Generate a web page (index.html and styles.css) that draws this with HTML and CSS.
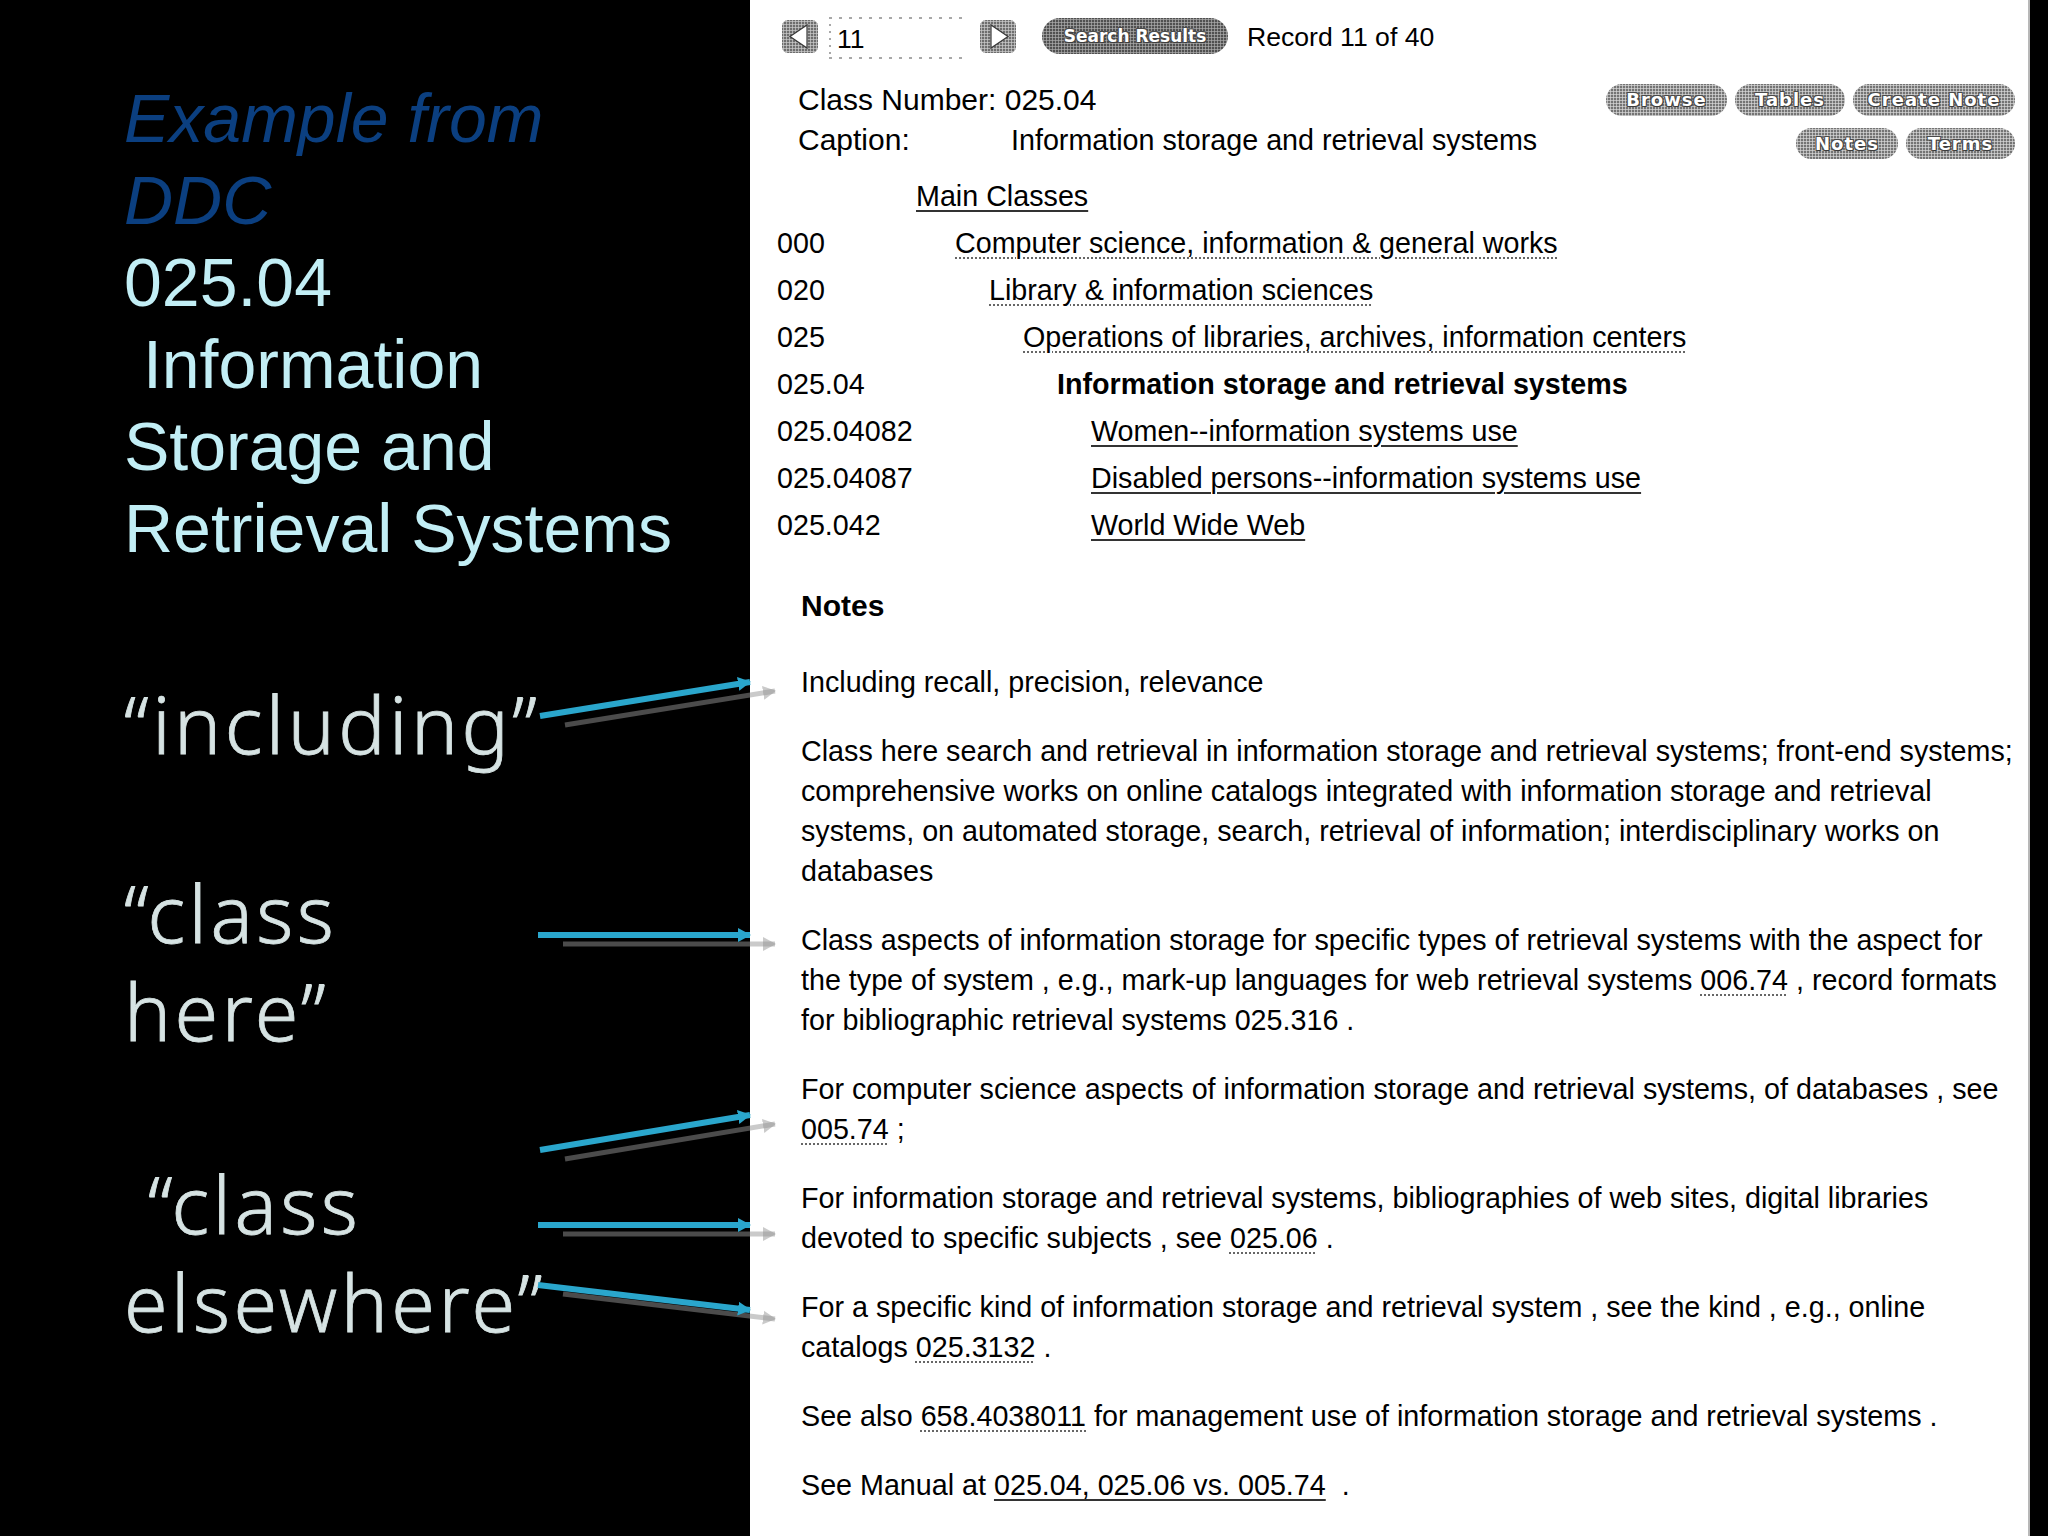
FILE: index.html
```html
<!DOCTYPE html>
<html lang="en">
<head>
<meta charset="utf-8">
<title>Example from DDC</title>
<link rel="stylesheet" href="styles.css">
</head>
<body>
<div class="slide">
  <section class="left">
    <h1 class="title"><span class="title-ex">Example from<br>DDC</span><br>025.04<br>&nbsp;Information<br>Storage and<br>Retrieval Systems</h1>
    <p class="quote q1">“including”</p>
    <p class="quote q2">“class<br>here”</p>
    <p class="quote q3"><span class="indent">“class</span><br>elsewhere”</p>
  </section>

  <section class="right">
    <div class="toolbar">
      <span class="nav-btn"><svg viewBox="0 0 36 33" width="36" height="33"><polygon points="25,5 25,28 8,16.5" fill="#fff" stroke="#3a3a3a" stroke-width="1.2"/></svg></span>
      <span class="recbox">11</span>
      <span class="nav-btn"><svg viewBox="0 0 36 33" width="36" height="33"><polygon points="11,5 11,28 28,16.5" fill="#fff" stroke="#3a3a3a" stroke-width="1.2"/></svg></span>
      <span class="pill pill-dark">Search Results</span>
      <span class="recno">Record 11 of 40</span>
    </div>

    <div class="header">
      <div class="info">
        <div class="classno">Class Number: 025.04</div>
        <div class="caption"><span class="label">Caption:</span>Information storage and retrieval systems</div>
      </div>
      <div class="btns">
        <div class="btn-row">
          <span class="pill w-browse">Browse</span>
          <span class="pill w-tables">Tables</span>
          <span class="pill w-create">Create Note</span>
        </div>
        <div class="btn-row">
          <span class="pill w-notes">Notes</span>
          <span class="pill w-terms">Terms</span>
        </div>
      </div>
    </div>

    <div class="hier">
      <div class="main-classes"><span class="solid">Main Classes</span></div>
      <div class="row"><span class="num">000</span><span class="txt l0"><span class="dotted">Computer science, information &amp; general works</span></span></div>
      <div class="row"><span class="num">020</span><span class="txt l1"><span class="dotted">Library &amp; information sciences</span></span></div>
      <div class="row"><span class="num">025</span><span class="txt l2"><span class="dotted">Operations of libraries, archives, information centers</span></span></div>
      <div class="row"><span class="num">025.04</span><span class="txt l3 current">Information storage and retrieval systems</span></div>
      <div class="row"><span class="num">025.04082</span><span class="txt l4"><span class="solid">Women--information systems use</span></span></div>
      <div class="row"><span class="num">025.04087</span><span class="txt l4"><span class="solid">Disabled persons--information systems use</span></span></div>
      <div class="row"><span class="num">025.042</span><span class="txt l4"><span class="solid">World Wide Web</span></span></div>
    </div>

    <h2 class="notes-h">Notes</h2>
    <p class="note first">Including recall, precision, relevance</p>
    <p class="note">Class here search and retrieval in information storage and retrieval systems; front-end systems;<br>comprehensive works on online catalogs integrated with information storage and retrieval<br>systems, on automated storage, search, retrieval of information; interdisciplinary works on<br>databases</p>
    <p class="note">Class aspects of information storage for specific types of retrieval systems with the aspect for<br>the type of system , e.g., mark-up languages for web retrieval systems <span class="dotted">006.74</span> , record formats<br>for bibliographic retrieval systems 025.316 .</p>
    <p class="note">For computer science aspects of information storage and retrieval systems, of databases , see<br><span class="dotted">005.74</span> ;</p>
    <p class="note">For information storage and retrieval systems, bibliographies of web sites, digital libraries<br>devoted to specific subjects , see <span class="dotted">025.06</span> .</p>
    <p class="note">For a specific kind of information storage and retrieval system , see the kind , e.g., online<br>catalogs <span class="dotted">025.3132</span> .</p>
    <p class="note">See also <span class="dotted">658.4038011</span> for management use of information storage and retrieval systems .</p>
    <p class="note">See Manual at <span class="solid">025.04, 025.06 vs. 005.74</span> &nbsp;.</p>
  </section>

  <div class="edge"></div>

  <svg class="arrows" width="2048" height="1536" viewBox="0 0 2048 1536">
    <defs>
      <marker id="hc" markerUnits="userSpaceOnUse" markerWidth="14" markerHeight="16" refX="12" refY="8" orient="auto">
        <polygon points="0,1 13,8 0,15" fill="#2aa6cc"/>
      </marker>
      <marker id="hg" markerUnits="userSpaceOnUse" markerWidth="14" markerHeight="16" refX="12" refY="8" orient="auto">
        <polygon points="0,1 13,8 0,15" fill="rgba(150,150,150,0.5)"/>
      </marker>
    </defs>
    <g class="shadow" transform="translate(25 9)">
      <line x1="540" y1="716" x2="750" y2="682"/>
      <line x1="538" y1="935" x2="750" y2="935"/>
      <line x1="540" y1="1150" x2="750" y2="1115"/>
      <line x1="538" y1="1225" x2="750" y2="1225"/>
      <line x1="538" y1="1285" x2="750" y2="1310"/>
    </g>
    <g class="cyan">
      <line x1="540" y1="716" x2="750" y2="682"/>
      <line x1="538" y1="935" x2="750" y2="935"/>
      <line x1="540" y1="1150" x2="750" y2="1115"/>
      <line x1="538" y1="1225" x2="750" y2="1225"/>
      <line x1="538" y1="1285" x2="750" y2="1310"/>
    </g>
  </svg>
</div>
</body>
</html>
```

FILE: styles.css
```css
html, body {
  margin: 0;
  padding: 0;
  background: #000;
}

.slide {
  position: relative;
  width: 2048px;
  height: 1536px;
  overflow: hidden;
  display: grid;
  grid-template-columns: 750px 1280px 18px;
  background: #000;
}

/* ---------- left panel ---------- */
.left {
  background: #000;
  padding-left: 124px;
  padding-top: 77px;
  box-sizing: border-box;
}

.title {
  margin: 0;
  font-family: "Liberation Sans", Arial, sans-serif;
  font-weight: normal;
  font-size: 68px;
  line-height: 82px;
  color: #c2eef5;
  white-space: nowrap;
}

.title-ex {
  font-style: italic;
  color: #0b3f80;
}

.quote {
  margin: 0;
  font-family: "Noto Sans", "DejaVu Sans", sans-serif;
  font-weight: 300;
  font-size: 79px;
  line-height: 98px;
  color: #d6e3e3;
  -webkit-text-stroke: 0.8px #d6e3e3;
  letter-spacing: 3.5px;
  white-space: nowrap;
}

.q1 { margin-top: 106px; }
.q2 { margin-top: 91px; }
.q3 { margin-top: 95px; }
.indent { padding-left: 24px; }

/* ---------- right panel ---------- */
.right {
  background: #fff;
  border-right: 2px solid #b8b8b8;
  font-family: "Liberation Sans", Arial, sans-serif;
  font-size: 28.7px;
  color: #000;
  box-sizing: border-box;
}

.toolbar {
  display: flex;
  align-items: center;
  height: 40px;
  margin-top: 16px;
  padding-left: 32px;
  font-size: 26.6px;
}

.nav-btn {
  display: block;
  width: 36px;
  height: 33px;
  border-radius: 6px;
  background-color: #6e6e6e;
  background-image: radial-gradient(circle, #c4c4c4 0.9px, transparent 1.3px);
  background-size: 3px 3px;
}

.nav-btn svg { display: block; }

.recbox {
  display: block;
  width: 140px;
  height: 42px;
  margin: 4px 11px 0;
  box-sizing: border-box;
  padding-left: 8px;
  line-height: 44px;
  background:
    repeating-linear-gradient(90deg, #a8a8a8 0 3px, transparent 3px 10px) left top / 100% 2px no-repeat,
    repeating-linear-gradient(90deg, #a8a8a8 0 3px, transparent 3px 10px) left bottom / 100% 2px no-repeat,
    repeating-linear-gradient(180deg, #a8a8a8 0 2px, transparent 2px 7px) left top / 2px 100% no-repeat;
}

.pill {
  display: inline-block;
  height: 32px;
  line-height: 32px;
  border-radius: 16px;
  box-sizing: border-box;
  text-align: center;
  white-space: nowrap;
  font-family: "DejaVu Sans", Verdana, sans-serif;
  font-weight: bold;
  font-size: 18px;
  letter-spacing: 1px;
  color: #fff;
  text-shadow: 1px 1px 0 #3c3c3c, -1px -1px 0 #4a4a4a, 1px -1px 0 #4a4a4a, -1px 1px 0 #4a4a4a;
  background-color: #747474;
  background-image: radial-gradient(circle, #d0d0d0 0.9px, transparent 1.3px);
  background-size: 3px 3px;
}

.pill-dark {
  width: 186px;
  height: 36px;
  line-height: 36px;
  border-radius: 18px;
  margin-left: 26px;
  margin-right: 19px;
  font-size: 17px;
  letter-spacing: 0;
  background-color: #505050;
  background-image: radial-gradient(circle, #a4a4a4 0.9px, transparent 1.3px);
}

.recno {
  line-height: 40px;
  padding-top: 2px;
}

.header {
  display: flex;
  justify-content: space-between;
  margin-top: 24px;
  padding-left: 48px;
  padding-right: 13px;
}

.info {
  line-height: 40px;
}

.classno { font-size: 30px; }
.caption { font-size: 28.7px; }
.caption .label { font-size: 30px; }

.label {
  display: inline-block;
  width: 213px;
}

.btns {
  display: flex;
  flex-direction: column;
  align-items: flex-end;
  gap: 12px;
  margin-top: 4px;
}

.btn-row {
  display: flex;
  gap: 8px;
}

.w-browse { width: 121px; }
.w-tables { width: 110px; }
.w-create { width: 162px; }
.w-notes { width: 102px; height: 31px; line-height: 31px; }
.w-terms { width: 109px; height: 31px; line-height: 31px; }

.hier {
  margin-top: 13px;
  padding-left: 27px;
  line-height: 47px;
}

.main-classes { padding-left: 139px; }

.row { display: flex; white-space: nowrap; }
.num { width: 178px; flex: none; }
.l0 { padding-left: 0; }
.l1 { padding-left: 34px; }
.l2 { padding-left: 68px; }
.l3 { padding-left: 102px; }
.l4 { padding-left: 136px; }
.current { font-weight: bold; }

.solid {
  text-decoration: underline solid #333;
  text-decoration-thickness: 1.5px;
  text-underline-offset: 4px;
}

.dotted {
  text-decoration: underline dotted #666;
  text-decoration-thickness: 1.5px;
  text-underline-offset: 4px;
}

.notes-h {
  margin: 37px 0 0;
  padding-left: 51px;
  font-size: 30px;
  line-height: 40px;
  font-weight: bold;
}

.note {
  margin: 29px 0 0;
  padding-left: 51px;
  line-height: 40px;
  white-space: nowrap;
}

.note.first { margin-top: 36px; }

.edge { background: #000; }

/* ---------- overlay arrows ---------- */
.arrows {
  position: absolute;
  left: 0;
  top: 0;
  pointer-events: none;
}

.arrows .cyan line {
  stroke: #2aa6cc;
  stroke-width: 6;
  marker-end: url(#hc);
}

.arrows .shadow line {
  stroke: rgba(150, 150, 150, 0.5);
  stroke-width: 5;
  marker-end: url(#hg);
}
```
